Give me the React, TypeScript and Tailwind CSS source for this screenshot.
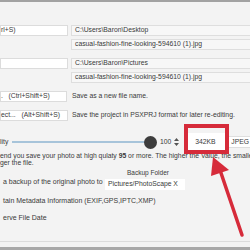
import React from "react";

/* Save-as dialog, cropped: paths, quality slider, backup and metadata options. */

function PathBox({ children }: { children: React.ReactNode }) {
  return (
    <div className="flex h-[11px] w-[190px] shrink-0 items-center border border-[#dedede] bg-[#f7f7f7] pl-[3px] leading-none">
      {children}
    </div>
  );
}

function LeftBox({ children, w = "w-[68px]" }: { children?: React.ReactNode; w?: string }) {
  return (
    <div className={`flex h-[11px] ${w} shrink-0 items-center whitespace-pre border border-[#dcdcdc] bg-white leading-none`}>
      {children}
    </div>
  );
}

function PathGroup({ left, folder }: { left?: React.ReactNode; folder: string }) {
  return (
    <div className="flex flex-col gap-[3px]">
      <div className="flex items-center gap-[3px]">
        <LeftBox>{left}</LeftBox>
        <PathBox>{folder}</PathBox>
      </div>
      <div className="flex items-center pl-[71px]">
        <PathBox>casual-fashion-fine-looking-594610 (1).jpg</PathBox>
      </div>
    </div>
  );
}

function ActionRow({ label, note, w }: { label: string; note: string; w: string }) {
  return (
    <div className="flex items-center">
      <LeftBox w={w}>{label}</LeftBox>
      <span className="ml-auto w-[178px] shrink-0 whitespace-nowrap">{note}</span>
    </div>
  );
}

function Option({ children }: { children: React.ReactNode }) {
  return <div className="whitespace-nowrap pl-[3px]">{children}</div>;
}

export default function App() {
  return (
    <div
      className="relative h-[250px] w-[250px] overflow-hidden bg-[#f3f3f3] text-[6.8px] text-[#3a3a3a]"
      style={{ fontFamily: '"Liberation Sans", Arial, sans-serif' }}
    >
      <div className="h-[2px] bg-[#a2a2a2]" />

      <div className="mt-[23px] flex flex-col">
        <PathGroup left="rl+S)" folder="C:\Users\Baron\Desktop" />
        <div className="mt-[8px]">
          <PathGroup folder="C:\Users\Baron\Pictures" />
        </div>

        <div className="mt-[8px] flex flex-col gap-[8px]">
          <ActionRow label=".   (Ctrl+Shift+S)" note="Save as a new file name." w="w-[67px]" />
          <ActionRow label="ect...   (Alt+Shift+S)" note="Save the project in PSXPRJ format for later re-editing." w="w-[68px]" />
        </div>

        {/* Quality */}
        <div className="mt-[14px] flex h-[14px] items-center">
          <span className="w-[12px] shrink-0">lity</span>
          <div className="relative flex h-[14px] w-[145px] shrink-0 items-center">
            <div className="h-[2px] w-[138px] bg-[#a7c4da]" />
            <div className="-ml-[6px] size-[13px] rounded-full bg-[#3d3d3d]" />
          </div>
          <span className="ml-[3px]">100</span>
          <svg width="5" height="8" viewBox="0 0 5 8" className="ml-[3px] shrink-0">
            <path d="M2.5 0 L5 3 H0 Z M2.5 8 L5 5 H0 Z" fill="#555" />
          </svg>
          <div className="ml-[6px] flex h-[18px] w-[40px] shrink-0 items-center justify-center bg-white">342KB</div>
          <div className="ml-[3px] flex h-[12px] w-[30px] shrink-0 items-center border border-[#dedede] bg-white pl-[2px]">JPEG</div>
        </div>
        <div className="mt-[3px] whitespace-nowrap leading-[7px]">
          end you save your photo at high qulaty <b>95</b> or more. The higher the Value, the smaller the image
        </div>
        <div className="whitespace-nowrap leading-[7px]">ger the file.</div>

        {/* Backup */}
        <div className="mt-[2px] flex items-end">
          <span className="mb-[2px] whitespace-nowrap pl-[3px] text-[7px]">a backup of the original photo to</span>
          <div className="ml-auto mr-[65px] flex flex-col">
            <span className="mb-[1px] pl-[22px] text-[6.5px]">Backup Folder</span>
            <div className="flex h-[11px] w-[80px] items-center bg-white pl-[3px]">Pictures/PhotoScape X</div>
          </div>
        </div>

        <div className="mt-[6px] flex flex-col gap-[7px] text-[7px]">
          <Option>tain Metadata Information (EXIF,GPS,IPTC,XMP)</Option>
          <Option>erve File Date</Option>
        </div>
      </div>

      <div className="absolute inset-x-0 bottom-[8px] h-px bg-[#dcdcdc]" />
      <div className="absolute inset-x-0 bottom-0 h-[3px] bg-[#a8a8a8]" />

      {/* Annotation: red frame around the file size, and the arrow to it. */}
      <div className="absolute left-[184px] top-[124px] h-[30px] w-[45px] border-[4px] border-[#d62b3a]" />
      <svg className="absolute inset-0" width="250" height="250" viewBox="0 0 250 250">
        <line x1="242" y1="235" x2="220" y2="170" stroke="#d62b3a" strokeWidth="3.5" strokeLinecap="round" />
        <path d="M213 157 L229 170 L211 176 Z" fill="#d62b3a" />
      </svg>
    </div>
  );
}
